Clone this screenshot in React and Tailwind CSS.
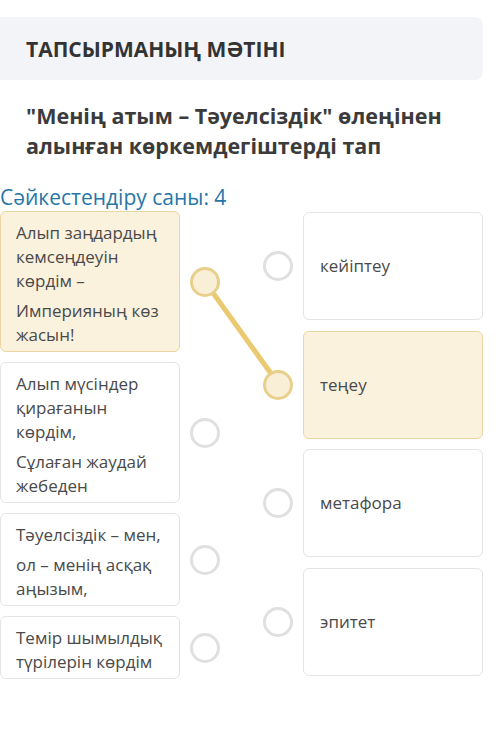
import React from "react";

const left = [
    { id: 1, lines: [["Алып заңдардың", "кемсеңдеуін", "көрдім –"], ["Империяның көз", "жасын!"]], active: true },
    { id: 2, lines: [["Алып мүсіндер", "қирағанын", "көрдім,"], ["Сұлаған жаудай", "жебеден"]] },
    { id: 3, lines: [["Тәуелсіздік – мен,"], ["ол – менің асқақ", "аңызым,"]] },
    { id: 4, lines: [["Темір шымылдық", "түрілерін көрдім"]] },
];

const right = [
    { id: 1, text: "кейіптеу" },
    { id: 2, text: "теңеу", active: true },
    { id: 3, text: "метафора" },
    { id: 4, text: "эпитет" },
];

function Dot({ active }) {
    return (
        <div
            className={
                "relative z-10 w-[30px] h-[30px] shrink-0 rounded-full border-[3px] " +
                (active ? "bg-[#f9efd7] border-[#e8cf8c]" : "bg-white border-[#e0e0e0]")
            }
        />
    );
}

export default function App() {
    return (
        <div className="w-[500px] min-h-[753px] bg-white pt-[17px] pr-[17px] font-['Open_Sans',sans-serif]">
            <div className="h-[63px] bg-[#f3f4f7] rounded-r-lg flex items-center pl-[26px] pt-[3px]">
                <h2 className="text-[21px] font-bold text-[#333]">ТАПСЫРМАНЫҢ МӘТІНІ</h2>
            </div>

            <p className="mt-[21px] px-[26px] text-[21.5px] leading-[30px] font-bold text-[#3b3b3b]">
                "Менің атым – Тәуелсіздік" өлеңінен алынған көркемдегіштерді тап
            </p>

            <div className="mt-[22px] text-[21px] leading-[28px] text-[#2676a8]">Сәйкестендіру саны: 4</div>

            <div className="relative flex justify-between">
                <svg className="absolute inset-0 w-full h-full pointer-events-none" viewBox="0 0 483 470" preserveAspectRatio="none">
                    <line x1="205" y1="71" x2="278" y2="173" stroke="#ebc970" strokeWidth="5" strokeLinecap="round" />
                </svg>

                <div className="flex flex-col gap-[10px] w-[220px]">
                    {left.map((item) => (
                        <div key={item.id} className="flex items-center gap-[10px]">
                            <div
                                className={
                                    "w-[180px] rounded-md border-[1.5px] pl-[15px] pr-[8px] pt-[9px] pb-[4px] text-[17px] leading-[24px] text-[#4a4a4a] flex flex-col gap-[6px] " +
                                    (item.active ? "bg-[#fbf2de] border-[#ead6a2]" : "bg-white border-[#e4e4e4]")
                                }
                            >
                                {item.lines.map((para, i) => (
                                    <p key={i}>
                                        {para.map((l, j) => (
                                            <span key={j} className="block">{l}</span>
                                        ))}
                                    </p>
                                ))}
                            </div>
                            <Dot active={item.active} />
                        </div>
                    ))}
                </div>

                <div className="flex flex-col gap-[10.6px] w-[220px] pt-[1px]">
                    {right.map((item) => (
                        <div key={item.id} className="flex items-center gap-[10px]">
                            <Dot active={item.active} />
                            <div
                                className={
                                    "w-[180px] h-[108px] rounded-md border-[1.5px] pl-[16px] flex items-center text-[17px] text-[#4a4a4a] " +
                                    (item.active ? "bg-[#fbf2de] border-[#ead6a2]" : "bg-white border-[#e4e4e4]")
                                }
                            >
                                {item.text}
                            </div>
                        </div>
                    ))}
                </div>
            </div>
        </div>
    );
}
